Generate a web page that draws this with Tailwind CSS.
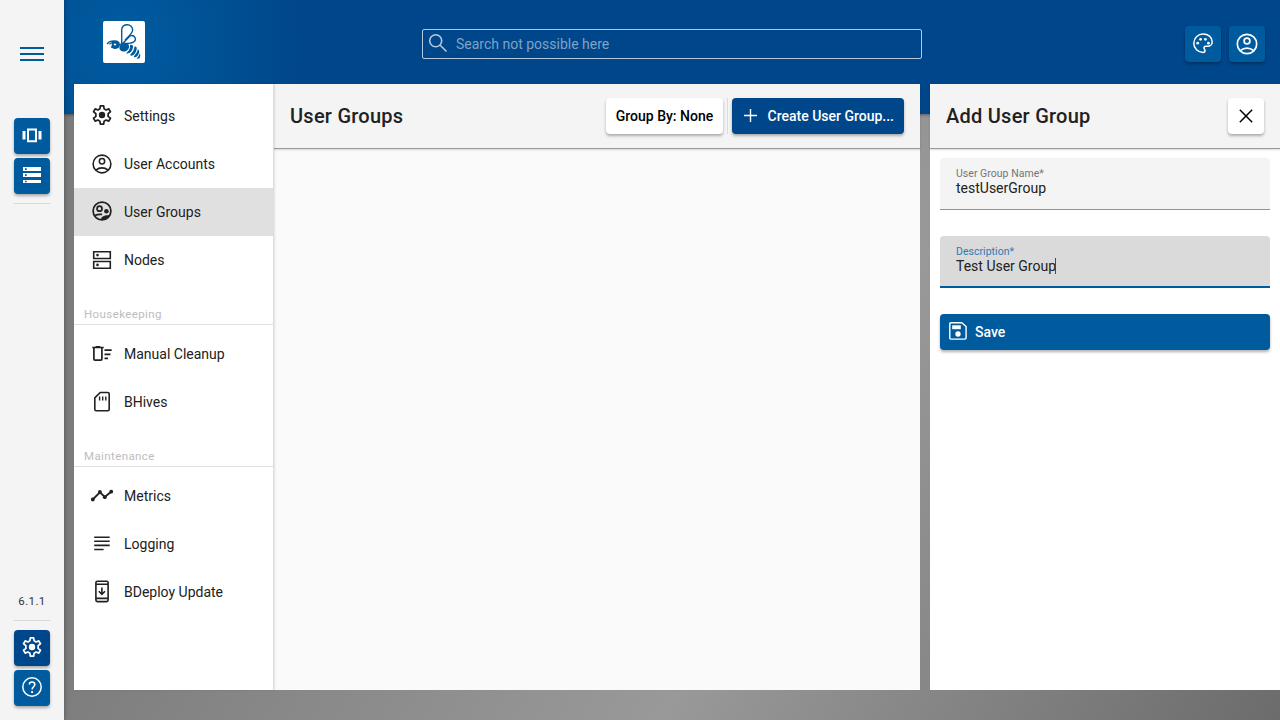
<!DOCTYPE html>
<html lang="en">
<head>
<meta charset="utf-8">
<title>BDeploy - User Groups</title>
<script src="https://cdn.jsdelivr.net/npm/@tailwindcss/browser@4"></script>
</head>
<body class="flex h-[720px] w-[1280px] overflow-hidden font-['Roboto',sans-serif] text-sm text-[#212121]">
<svg class="hidden">
  <symbol id="gear" viewBox="0 0 24 24"><path fill="none" stroke="currentColor" stroke-width="1.9" stroke-linejoin="round" d="M10.200 2h3.600l.5 3.300 2.100 1.200 3-1.200 1.800 3.200-2.500 2v3l2.500 2-1.800 3.200-3-1.200-2.100 1.200-.5 3.300h-3.600l-.5-3.300-2.100-1.200-3 1.200-1.800-3.200 2.500-2v-3l-2.500-2 1.800-3.200 3 1.200 2.100-1.200z"/><circle cx="12" cy="12" r="3.500" fill="currentColor"/></symbol>
  <symbol id="account" viewBox="0 0 24 24"><g fill="none" stroke="currentColor" stroke-width="1.700"><circle cx="12" cy="12" r="9.700"/><circle cx="12" cy="9" r="2.900"/><path d="M5.400 18.600c3.700-3.200 9.500-3.200 13.200 0"/></g></symbol>
  <symbol id="groups" viewBox="0 0 24 24"><g fill="none" stroke="currentColor" stroke-width="1.900"><circle cx="12" cy="12" r="9.700"/><circle cx="9.300" cy="9.500" r="2.700"/><path d="M4.500 17c2.200-1.300 5-1.600 7.600-1.200"/></g><circle cx="16.800" cy="12.300" r="2.500" fill="currentColor"/><path fill="currentColor" d="M10.800 21.300c.3-3.200 3.200-5 9.400-4.700l.4.700c-2 3.200-5.800 4.800-9.800 4z"/></symbol>
</svg>

<aside class="z-20 flex w-16 shrink-0 flex-col items-center bg-[#f4f4f4] text-white shadow-[1px_0_4px_rgba(0,0,0,.25)]">
  <div class="mt-[47px] flex h-3.5 w-6 flex-col justify-between">
    <span class="h-0.5 bg-[#005a9e]"></span><span class="h-0.5 bg-[#005a9e]"></span><span class="h-0.5 bg-[#005a9e]"></span>
  </div>
  <div class="mt-[57px] grid size-9 place-items-center rounded bg-[#005a9e] shadow-[0_2px_3px_rgba(0,0,0,.3)]">
    <svg class="size-6 -translate-y-px" viewBox="0 0 24 24"><path fill="currentColor" d="M2.500 8h3v8.600h-3zM18.500 8h3v8.600h-3zM7 5.500h10v13.700H7zm2 2v9.700h6V7.500z" fill-rule="evenodd"/></svg>
  </div>
  <div class="mt-1 grid size-9 place-items-center rounded bg-[#005a9e] shadow-[0_2px_3px_rgba(0,0,0,.3)]">
    <svg class="size-6 -translate-y-px" viewBox="0 0 24 24"><path fill="currentColor" fill-rule="evenodd" d="M3 4h18v4H3zm2 1.200v1.700h1.700V5.200zM3 10h18v4H3zm2 1.200v1.700h1.700v-1.700zM3 17h18v3H3zm2 .8v1.400h1.700v-1.400z"/></svg>
  </div>
  <div class="mt-[9px] h-px w-9 bg-[#d8d8d8]"></div>
  <div class="mt-auto text-[11.5px] leading-4 tracking-[.4px] text-[#333]">6.1.1</div>
  <div class="mt-[11px] h-px w-9 bg-[#d8d8d8]"></div>
  <div class="mt-[9px] grid size-9 place-items-center rounded bg-[#00468a] shadow-[0_2px_3px_rgba(0,0,0,.3)]"><svg class="size-[22px] -translate-y-px"><use href="#gear"/></svg></div>
  <div class="mt-1 mb-3.5 grid size-9 place-items-center rounded bg-[#005a9e] shadow-[0_2px_3px_rgba(0,0,0,.3)]">
    <svg class="size-6 -translate-y-px" viewBox="0 0 24 24" fill="none" stroke="currentColor" stroke-width="1.500"><circle cx="12" cy="12" r="9.200"/><path d="M9.300 9.600c0-3.700 5.500-3.500 5.500-.2 0 2.200-2.700 2.400-2.700 5"/><path d="M12.100 16.100v1.900" stroke-width="1.900"/></svg>
  </div>
</aside>

<div class="flex min-w-0 grow flex-col bg-[linear-gradient(120deg,#7c7c7c_0%,#7c7c7c_22%,#999_62%,#6c6c6c_100%)]">
  <header class="h-[114px] shrink-0 bg-[radial-gradient(circle_at_60px_42px,#005a9e_0%,#005a9e_20px,#00468a_180px)] shadow-[0_1px_3px_rgba(0,0,0,.4)]">
    <div class="flex h-[84px] items-center pr-[15px] pl-[39px] pt-1">
      <div class="-mt-1 size-[42px] rounded-[2px] bg-white">
        <svg class="size-[42px]" viewBox="0 0 42 42">
          <g fill="none" stroke="#005a9e" stroke-width="1.400"><path d="M18.700 22.500V8.800c0-7 11.300-6.800 10.900.5-.3 3.200-4.300 6.200-7.600 10"/><path d="M19.700 22.500l7.500-7.700c4.200-1.700 7.300 4 3.200 6.300-3 1.700-6.600 1.300-10.600 1.500"/><path stroke-width="1.200" d="M4 23.200c2-3 5-3.600 8-2.400M6.300 23.200l3-1.700"/></g>
          <g fill="#005a9e"><path fill-rule="evenodd" d="M8.800 19.800c4-1.400 8 0 8.200 3.500.1 3.500-3.200 5.200-6.200 4.400l-3-1.100c1.200-1.900 1.300-4.500 1-6.800zm2.400 2.600l-.6 1.500 1.900.6.900-1.600z"/><path d="M17.500 22.300c3-1.200 8.300-.4 8.600 2.700.1 3.800-3 6.100-6.500 5.500-2.400-.4-3.600-2.300-3.100-4.400z"/><path d="M27 23.800c2.500-.1 3.300.8 3 2.300-.4 3.300-2 6-5.200 6.300-2 .3-1.800-.3-.6-1.200 2.200-1.700 3.100-4 2.800-7.400z"/><path d="M31.600 25.200c2 .4 2.400 1.400 2.100 2.700-.6 3.200-2.100 5.800-4.500 6.700-1.900.6-2.400-.3-1.400-1.500 2-2.100 3.500-4.500 3.800-7.900z"/><path d="M34.800 28.300c1.600.8 1.600 2 1.200 3.500-.7 2.400-1.900 4-3.600 4.400-1.700.2-1.900-.6-.9-1.700 1.500-1.700 2.900-3.700 3.300-6.200z"/><path d="M36.700 32.300c.9 1.600.6 3.600-.3 5.300l-2.900.2c1.500-1.500 2.700-3.200 3.200-5.500z"/></g>
        </svg>
      </div>
      <div class="ml-[277px] flex h-[30px] w-[500px] items-center rounded-[2px] border border-[#b3c8dc] text-[#7fa3c6]">
        <svg class="ml-[5px] size-[22px] text-[#b3c8dc]" viewBox="0 0 22 22" fill="none" stroke="currentColor" stroke-width="1.600"><circle cx="7.700" cy="7.700" r="6"/><path d="M12.200 12.200l6.300 6.300"/></svg>
        <span class="ml-1.5">Search not possible here</span>
      </div>
      <div class="ml-auto flex gap-2 text-white">
        <div class="grid size-9 place-items-center rounded bg-[#005a9e] shadow-[0_2px_3px_rgba(0,0,0,.3)]">
          <svg class="size-6 -translate-y-px" viewBox="0 0 24 24"><path fill="none" stroke="currentColor" stroke-width="1.500" d="M12 3a9 9 0 0 0 0 18.400c1.300 0 2-.8 2-1.900 0-1.300-1-1.500-1-2.600 0-1 .8-1.700 1.800-1.700h2c2.500 0 4.400-2 4.400-4.300C21.200 6.200 17.100 3 12 3z"/><g fill="currentColor"><circle cx="6.700" cy="12.200" r="1.400"/><circle cx="9.600" cy="8.300" r="1.400"/><circle cx="14.400" cy="8.300" r="1.400"/><circle cx="17.400" cy="12.200" r="1.400"/></g></svg>
        </div>
        <div class="grid size-9 place-items-center rounded bg-[#005a9e] shadow-[0_2px_3px_rgba(0,0,0,.3)]"><svg class="size-6"><use href="#account"/></svg></div>
      </div>
    </div>
  </header>

  <div class="z-10 mt-[-30px] mb-[30px] ml-2.5 flex grow gap-2.5">
    <div class="flex w-[846px]">
      <nav class="z-10 w-[200px] shrink-0 border-r border-[#dcdcdc] bg-white pt-2 shadow-[1px_0_2px_rgba(0,0,0,.1)]">
        <a class="flex h-12 items-center gap-[11px] pl-[17px]"><svg class="size-[22px] -translate-y-px"><use href="#gear"/></svg>Settings</a>
        <a class="flex h-12 items-center gap-[11px] pl-[17px]"><svg class="size-[22px]"><use href="#account"/></svg>User Accounts</a>
        <a class="flex h-12 items-center gap-[11px] bg-[#e0e0e0] pl-[17px]"><svg class="size-[22px] -translate-y-px"><use href="#groups"/></svg>User Groups</a>
        <a class="flex h-12 items-center gap-[11px] pl-[17px]"><svg class="size-[22px]" viewBox="0 0 22 22"><path fill="none" stroke="currentColor" stroke-width="1.600" d="M2.700 2.700h16.600v6.800H2.700zM2.700 12.500h16.600v6.800H2.700z"/><circle cx="6.500" cy="6.100" r="1.300" fill="currentColor"/><circle cx="6.500" cy="15.900" r="1.300" fill="currentColor"/></svg>Nodes</a>
        <div class="mt-5 mb-[5px] flex h-[21px] items-center border-b border-[#e0e0e0] pl-2.5 text-[11.5px] tracking-[.4px] text-[#bdbdbd]">Housekeeping</div>
        <a class="flex h-12 items-center gap-[11px] pl-[17px]"><svg class="size-[22px]" viewBox="0 0 22 22" fill="none" stroke="currentColor" stroke-width="1.700"><path d="M1.300 4.500h11.400M4.500 3.800h4.800M2.900 4.800v11.300q0 1 1 1h6q1 0 1-1V4.800M13.500 7.200h7.200M13.500 11.300h6M13.500 15.400h3.500"/></svg>Manual Cleanup</a>
        <a class="flex h-12 items-center gap-[11px] pl-[17px]"><svg class="size-[22px]" viewBox="0 0 22 22" fill="none" stroke="currentColor" stroke-width="1.600"><path d="M9.200 1.500h7.600q1.400 0 1.400 1.400v15.600q0 1.200-1.400 1.200H5.200q-1.400 0-1.400-1.400V6.900z"/><path stroke-width="1.400" d="M8.600 5.500v4M11.700 5.500v4M14.800 5.500v4"/></svg>BHives</a>
        <div class="mt-5 mb-[5px] flex h-[21px] items-center border-b border-[#e0e0e0] pl-2.5 text-[11.5px] tracking-[.4px] text-[#bdbdbd]">Maintenance</div>
        <a class="flex h-12 items-center gap-[11px] pl-[17px]"><svg class="size-[22px]" viewBox="0 0 22 22"><path fill="none" stroke="currentColor" stroke-width="1.800" d="M1.700 14.500l7.200-7.200 4.900 4.700 6.600-5.500"/><g fill="currentColor"><circle cx="1.800" cy="14.500" r="1.900"/><circle cx="8.900" cy="7" r="1.900"/><circle cx="13.800" cy="12.200" r="1.900"/><circle cx="20.200" cy="6.700" r="1.900"/></g></svg>Metrics</a>
        <a class="flex h-12 items-center gap-[11px] pl-[17px]"><svg class="size-[22px]" viewBox="0 0 22 22"><path fill="none" stroke="currentColor" stroke-width="1.600" d="M3.200 4.200h15.500M3.200 8.200h15.500M3.200 12.400h15.500M3.200 16.500h9.400"/></svg>Logging</a>
        <a class="flex h-12 items-center gap-[11px] pl-[17px]"><svg class="size-[22px] overflow-visible" viewBox="0 0 22 22" fill="none" stroke="currentColor" stroke-width="1.600"><rect x="4.900" y=".3" width="12.200" height="20.300" rx="1.500"/><path d="M5 3.300h12M5 17.400h12M10.900 6.500v6.500M7.800 10.300l3.100 3 3.100-3"/></svg>BDeploy Update</a>
      </nav>
      <main class="flex grow flex-col bg-[#fafafa]">
        <div class="flex h-[65px] items-center border-b border-[#999] bg-[#f4f4f4] pr-4 pl-4 shadow-[0_1px_2px_rgba(0,0,0,.15)]">
          <h1 class="text-xl font-medium tracking-[.25px]">User Groups</h1>
          <div class="ml-auto grid h-9 w-[117px] place-items-center rounded bg-white font-medium text-black shadow-[0_2px_3px_rgba(0,0,0,.3)]">Group By: None</div>
          <div class="mx-1 h-9 w-px bg-[#dcdcdc]"></div>
          <div class="flex h-9 w-[172px] items-center rounded bg-[#00468a] font-medium text-white shadow-[0_2px_3px_rgba(0,0,0,.3)]">
            <svg class="ml-[11px] size-[15px] -translate-y-px" viewBox="0 0 15 15"><path stroke="currentColor" stroke-width="1.400" d="M7.500 1v13M1 7.500h13"/></svg>
            <span class="ml-[9.500px]">Create User Group...</span>
          </div>
        </div>
      </main>
    </div>
    <section class="grow bg-white">
      <div class="flex h-[65px] items-center justify-between border-b border-[#999] bg-[#f4f4f4] px-4 shadow-[0_1px_2px_rgba(0,0,0,.15)]">
        <h2 class="text-xl font-medium tracking-[.25px]">Add User Group</h2>
        <div class="grid size-9 place-items-center rounded bg-white text-black shadow-[0_2px_3px_rgba(0,0,0,.3)]"><svg class="size-[14px]" viewBox="0 0 14 14"><path stroke="currentColor" stroke-width="1.500" d="M.8.8l12.400 12.400M13.200.8L.8 13.200"/></svg></div>
      </div>
      <div class="px-2.5 pt-[9px]">
        <div class="h-[52px] rounded-t border-b border-[#949494] bg-[#f4f4f4] px-4 pt-[9px]">
          <div class="text-[10.5px] leading-[13px] tracking-[.03px] text-[#757575]">User Group Name*</div>
          <div class="leading-4">testUserGroup</div>
        </div>
        <div class="mt-[26px] h-[52px] rounded-t border-b-2 border-[#005a9e] bg-[#dadada] px-4 pt-[9px]">
          <div class="text-[10.5px] leading-[13px] tracking-[.03px] text-[#3379b0]">Description*</div>
          <div class="flex leading-4">Test User Group<span class="-ml-px h-4 w-px bg-[#005a9e]"></span></div>
        </div>
        <div class="mt-[26px] flex h-9 items-center rounded bg-[#005a9e] pl-[9px] font-medium text-white shadow-[0_2px_3px_rgba(0,0,0,.3)]">
          <svg class="size-[18px] -translate-y-px" viewBox="0 0 18 18"><path fill="none" stroke="currentColor" stroke-width="1.400" d="M2 .8h10.800l4.300 3.700v11.300q0 1.300-1.300 1.300H2Q.8 17.100.8 16V2Q.8.800 2 .8z"/><path fill="currentColor" d="M3.200 3.300h8.600v3.900H3.200z"/><circle cx="9" cy="12" r="2.700" fill="currentColor"/></svg>
          <span class="ml-2">Save</span>
        </div>
      </div>
    </section>
  </div>
</div>
</body>
</html>
